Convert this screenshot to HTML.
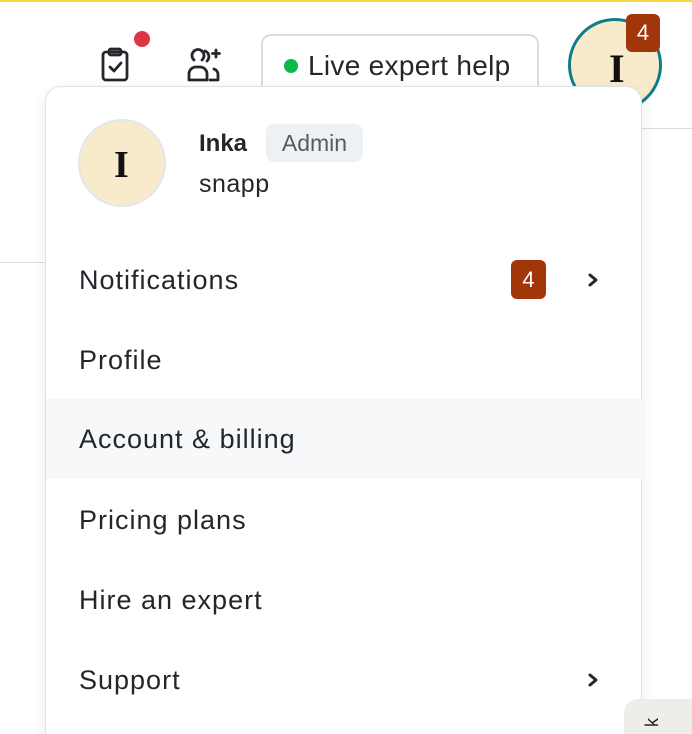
<!DOCTYPE html>
<html><head><style>
html,body{margin:0;width:692px;height:734px;overflow:hidden}
body{background:#fff;font-family:"Liberation Sans",sans-serif;color:#23272b;position:relative}
.a{position:absolute}
.item{position:absolute;left:46px;width:596px;height:80px;font-size:27px;letter-spacing:1px;line-height:80px;padding-left:33px;box-sizing:border-box}
.chev{position:absolute;left:540px;top:32px}
.av{border-radius:50%;background:#f8ebcb;overflow:hidden;box-sizing:border-box}
.av span{position:absolute;font-family:"Liberation Serif",serif;font-weight:bold;color:#111}
</style></head><body>
<div class="a" style="left:0;top:0;width:692px;height:2px;background:#f5d93a"></div>
<div class="a" style="left:0;top:262px;width:46px;height:1px;background:#d8dde2"></div>
<div class="a" style="left:642px;top:128px;width:50px;height:1px;background:#d8dde2"></div>
<svg class="a" style="left:100px;top:46px" width="32" height="36" viewBox="0 0 32 36" fill="none" stroke="#23272b" stroke-width="2.8" stroke-linecap="round" stroke-linejoin="round"><rect x="3" y="6" width="24" height="28" rx="3"/><rect x="9" y="3" width="12" height="6" rx="2"/><path d="M10 21l4 4 7-8"/></svg>
<div class="a" style="left:134px;top:31px;width:16px;height:16px;border-radius:50%;background:#dc3545"></div>
<svg class="a" style="left:186px;top:47px" width="38" height="36" viewBox="0 0 38 36" fill="none" stroke="#23272b" stroke-width="2.8" stroke-linecap="round" stroke-linejoin="round"><path d="M8 13a6 6 0 1 1 8 0"/><path d="M3 33v-6a7 7 0 0 1 7-7h4a7 7 0 0 1 7 7v6z"/><path d="M19 4a6 6 0 0 1 2 10"/><path d="M24 33h8v-5a6 6 0 0 0-4-6"/><path d="M30 3v7M26.5 6.5h7"/></svg>
<div class="a" style="left:261px;top:34px;width:278px;height:70px;border:2px solid #d8dde2;border-radius:10px;box-sizing:border-box"></div>
<div class="a" style="left:284px;top:59px;width:14px;height:14px;border-radius:50%;background:#0cb84a"></div>
<div class="a" style="left:308px;top:50px;font-size:28px;letter-spacing:0.3px">Live expert help</div>
<div class="a av" style="left:568px;top:18px;width:94px;height:94px;border:3px solid #0d7d86"><span style="left:38px;top:24px;font-size:40px">I</span></div>
<div class="a" style="left:626px;top:14px;width:34px;height:38px;border-radius:6px;background:#a0360a;color:#fff;font-size:22px;text-align:center;line-height:38px">4</div>
<div class="a" style="left:45px;top:86px;width:597px;height:648px;border:1.5px solid #dfe3e7;border-bottom:none;border-radius:16px 16px 0 0;background:#fff;box-shadow:0 4px 14px rgba(0,0,0,.08);box-sizing:border-box"></div>
<div class="a av" style="left:78px;top:119px;width:88px;height:88px;border:2px solid #e3e6ea"><span style="left:34px;top:22px;font-size:38px">I</span></div>
<div class="a" style="left:199px;top:130px;font-size:24px;font-weight:bold">Inka</div>
<div class="a" style="left:266px;top:124px;width:97px;height:38px;border-radius:8px;background:#eef1f4;color:#555b62;font-size:23px;text-align:center;line-height:38px">Admin</div>
<div class="a" style="left:199px;top:170px;font-size:25px;letter-spacing:0.5px">snapp</div>
<div class="item" style="top:240px">Notifications<div class="a" style="left:465px;top:20px;width:35px;height:39px;border-radius:6px;background:#a0360a;color:#fff;font-size:22px;text-align:center;line-height:39px;letter-spacing:0">4</div><svg class="chev" width="14" height="16" viewBox="0 0 14 16"><path d="M4 3l6 5-6 5" fill="none" stroke="#23272b" stroke-width="3" stroke-linecap="round" stroke-linejoin="round"/></svg></div>
<div class="item" style="top:320px">Profile</div>
<div class="item" style="top:399px;background:#f7f8f9">Account &amp; billing</div>
<div class="item" style="top:480px">Pricing plans</div>
<div class="item" style="top:560px">Hire an expert</div>
<div class="item" style="top:640px">Support<svg class="chev" width="14" height="16" viewBox="0 0 14 16"><path d="M4 3l6 5-6 5" fill="none" stroke="#23272b" stroke-width="3" stroke-linecap="round" stroke-linejoin="round"/></svg></div>
<div class="a" style="left:624px;top:699px;width:68px;height:35px;background:#eeedea;border-top-left-radius:14px;overflow:hidden"><div class="a" style="left:24px;top:13px;font-size:18px;transform:rotate(-90deg)">k</div></div>
</body></html>
